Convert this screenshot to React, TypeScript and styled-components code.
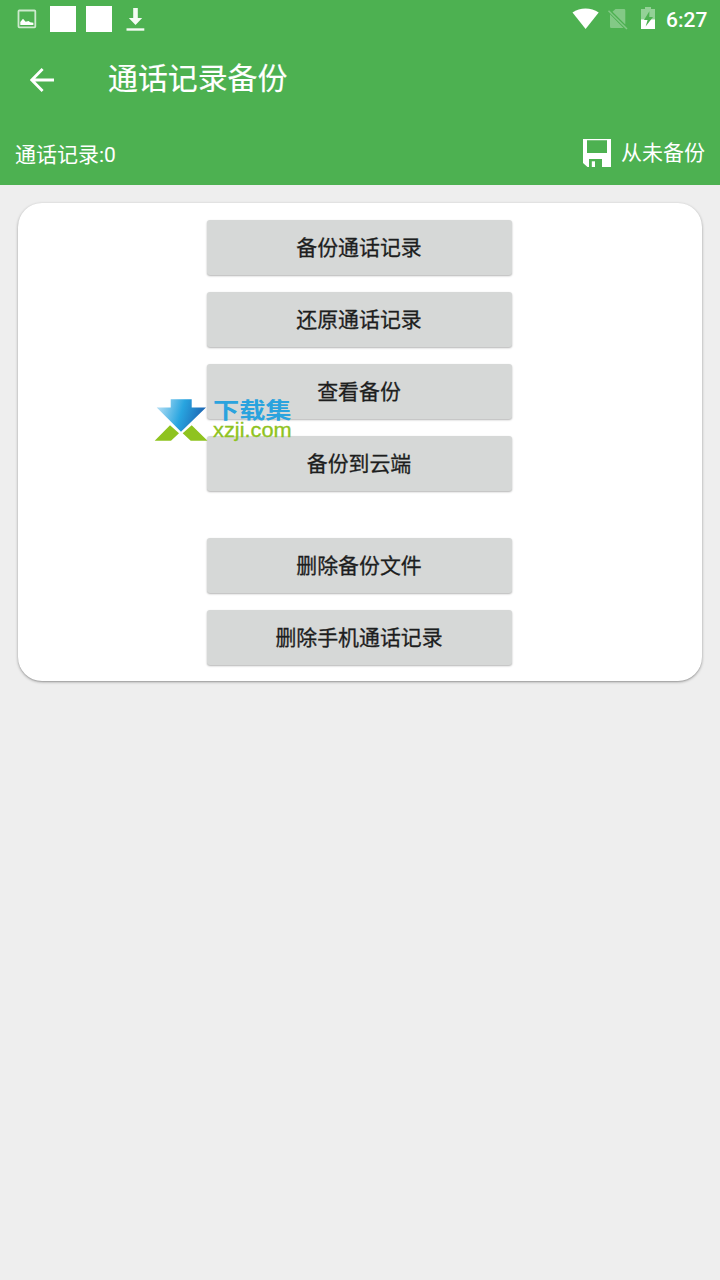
import React from "react";
import styled, { createGlobalStyle } from "styled-components";

const GlobalStyle = createGlobalStyle`
  * { box-sizing: border-box; }
  body {
    margin: 0;
    background: #eeeeee;
    font-family: Roboto, "Noto Sans CJK SC", sans-serif;
  }
`;

const Screen = styled.div`
  position: relative;
  width: 720px;
  height: 1280px;
  overflow: hidden;
  background: #eeeeee;
`;

const Header = styled.header`
  display: flex;
  flex-direction: column;
  height: 185px;
  background: #4db151;
  color: #fff;
`;

const StatusBar = styled.div`
  display: flex;
  justify-content: space-between;
  height: 38px;
  padding: 0 12px 0 17px;
`;

const StatusGroup = styled.div`
  display: flex;
  align-items: flex-start;
`;

const StatusIcon = styled.svg<{ $top: number; $gap: number }>`
  display: block;
  flex: none;
  margin-top: ${(p) => p.$top}px;
  margin-left: ${(p) => p.$gap}px;
`;

const Notice = styled.div<{ $gap: number }>`
  width: 26px;
  height: 26px;
  margin: 6px 0 0 ${(p) => p.$gap}px;
  background: #fff;
`;

const Clock = styled.span`
  width: 42px;
  margin: 8px 0 0 10px;
  font-size: 21px;
  font-weight: 500;
  line-height: 24px;
  white-space: nowrap;
`;

const Toolbar = styled.div`
  display: flex;
  align-items: center;
  height: 84px;
  padding-left: 30px;
`;

const BackIcon = styled.svg`
  display: block;
  flex: none;
`;

const Title = styled.h1`
  margin: -3px 0 0 54px;
  font-size: 29.9px;
  font-weight: 400;
  line-height: 40px;
  -webkit-text-stroke: 0.15px #fff;
`;

const InfoRow = styled.div`
  display: flex;
  justify-content: space-between;
  height: 63px;
  padding: 17px 15px 0;
  font-size: 21px;
  line-height: 28px;
`;

const Count = styled.span`
  margin-top: 2px;
`;

const BackupState = styled.div`
  display: flex;
  gap: 10px;
`;

const Card = styled.main`
  display: flex;
  flex-direction: column;
  align-items: center;
  gap: 47px;
  height: 478px;
  margin: 18px;
  padding-top: 17px;
  padding-right: 1px;
  border-radius: 24px;
  background: #fff;
  box-shadow: 0 1px 3px rgba(0, 0, 0, 0.35), 0 1px 1px rgba(0, 0, 0, 0.08);
`;

const ButtonGroup = styled.div`
  display: flex;
  flex-direction: column;
  gap: 17px;
`;

const ActionButton = styled.button`
  width: 305px;
  height: 55px;
  padding: 0 1px 0 0;
  border: 0;
  border-radius: 3px;
  background: #d6d8d7;
  color: #1d1e1e;
  box-shadow: 0 1px 2px rgba(0, 0, 0, 0.3);
  font: 400 20.9px/28px Roboto, "Noto Sans CJK SC", sans-serif;
  -webkit-text-stroke: 0.3px #1d1e1e;
`;

const Watermark = styled.div`
  position: absolute;
  left: 154px;
  top: 398px;
  display: flex;
  gap: 5px;
`;

const BrandText = styled.div`
  display: flex;
  flex-direction: column;
`;

const BrandName = styled.span`
  width: 66px;
  height: 23px;
  color: #2aa3de;
  font: 700 22px/21px "Noto Sans CJK SC", sans-serif;
  white-space: nowrap;
  transform: scaleX(1.19);
  transform-origin: left center;
`;

const BrandSite = styled.span`
  width: 70px;
  height: 18px;
  color: #8fc31f;
  font: 400 19.4px/18px "Liberation Sans", sans-serif;
  -webkit-text-stroke: 0.3px #8fc31f;
  transform: scaleX(1.125);
  transform-origin: left center;
`;

const primary = ["备份通话记录", "还原通话记录", "查看备份", "备份到云端"];
const destructive = ["删除备份文件", "删除手机通话记录"];

export default function App() {
  return (
    <Screen>
      <GlobalStyle />
      <Header>
        <StatusBar>
          <StatusGroup>
            <StatusIcon $top={9} $gap={0} width="20" height="20" viewBox="0 0 20 20">
              <rect x="1.5" y="1.5" width="16.8" height="16.8" rx="0.8" fill="none" stroke="#cdeace" strokeWidth="1.8" />
              <path d="M3.3 16v-3L6 9.8l2.6 3 3-.8 1.6 1.2 3.2.6V16z" fill="#fff" />
            </StatusIcon>
            <Notice $gap={13} />
            <Notice $gap={10} />
            <StatusIcon $top={7} $gap={14} width="20" height="25" viewBox="0 0 20 25">
              <path d="M7.2 1h4.6v10h4.4L9.5 18 2.8 11h4.4z" fill="#f4fbf4" />
              <path d="M.5 21.3h17.8v2.4H.5z" fill="#f4fbf4" />
            </StatusIcon>
          </StatusGroup>
          <StatusGroup>
            <StatusIcon $top={8} $gap={0} width="28" height="21" viewBox="0 0 28 21">
              <path d="M.5 4.6C8-1 19-1 26.7 4.6L13.6 21z" fill="#fff" />
            </StatusIcon>
            <StatusIcon $top={8} $gap={8} width="20" height="22" viewBox="0 0 20 22">
              <path d="M4.5 3.8 7.5 1H16q1.3 0 1.3 1.3v14.2zM2 6.2 15.5 20H3.3Q2 20 2 18.7z" fill="#83c986" />
              <path d="M.5 2.8 19 21" stroke="#83c986" strokeWidth="1.5" />
            </StatusIcon>
            <StatusIcon $top={7} $gap={13} width="15" height="22" viewBox="0 0 15 22">
              <path d="M4 0h6v2h4v10.3H0V2h4z" fill="#94d197" />
              <path d="M0 12.3h14V22H0z" fill="#fff" />
              <path d="M8.4 4.3 3 13h3.6l-2 6.6L12 9.9H8.3z" fill="#4db151" />
            </StatusIcon>
            <Clock>6:27</Clock>
          </StatusGroup>
        </StatusBar>
        <Toolbar>
          <BackIcon width="24" height="24" viewBox="0 0 24 24">
            <path d="M24 12H2M12.6 1 1.8 12l10.8 11" fill="none" stroke="#fff" strokeWidth="2.8" />
          </BackIcon>
          <Title>通话记录备份</Title>
        </Toolbar>
        <InfoRow>
          <Count>通话记录:0</Count>
          <BackupState>
            <svg width="28" height="28" viewBox="0 0 28 28">
              <path
                d="M0 0h28v28h-9v-8H6v8H4.5L0 24zM4 1.3V14h20V1.3z"
                fill="#fff"
                fillRule="evenodd"
              />
              <path d="M8.8 22.3H12V28H8.8z" fill="#fff" />
            </svg>
            <span>从未备份</span>
          </BackupState>
        </InfoRow>
      </Header>
      <Card>
        <ButtonGroup>
          {primary.map((label) => (
            <ActionButton key={label}>{label}</ActionButton>
          ))}
        </ButtonGroup>
        <ButtonGroup>
          {destructive.map((label) => (
            <ActionButton key={label}>{label}</ActionButton>
          ))}
        </ButtonGroup>
      </Card>
      <Watermark>
        <svg width="54" height="43" viewBox="0 0 54 43">
          <defs>
            <linearGradient id="arrow" x1="0" y1="0.3" x2="1" y2="0.5">
              <stop offset="0.05" stopColor="#a6d9f3" />
              <stop offset="0.5" stopColor="#28a5e0" />
              <stop offset="1" stopColor="#1c5fae" />
            </linearGradient>
          </defs>
          <path d="M16.7 1.2h21v8.2H52L27 33.7 2.7 9.4h14z" fill="url(#arrow)" />
          <path d="M.7 42.7 16 27.3l9 8-8 7.4zM53.5 42.7 37.7 27.3l-9 8 8 7.4z" fill="#8fc31f" />
        </svg>
        <BrandText>
          <BrandName>下载集</BrandName>
          <BrandSite>xzji.com</BrandSite>
        </BrandText>
      </Watermark>
    </Screen>
  );
}
